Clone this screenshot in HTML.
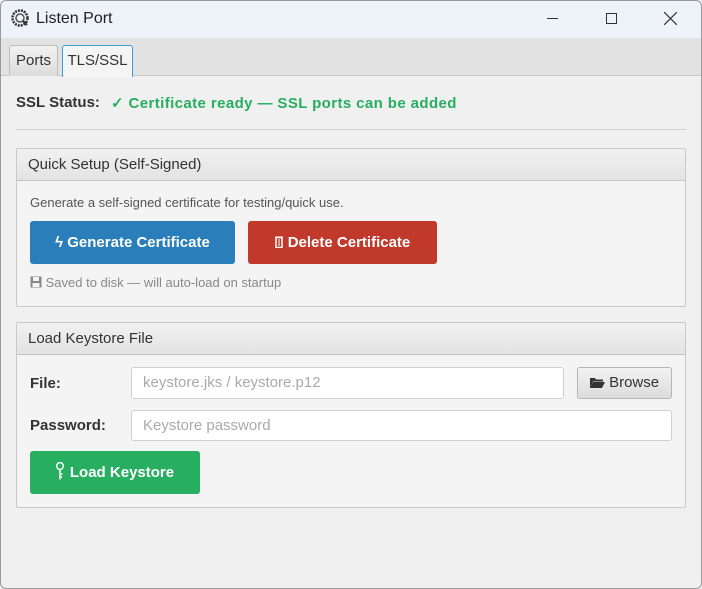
<!DOCTYPE html>
<html><head><style>
*{box-sizing:border-box;margin:0;padding:0}
body{width:702px;height:589px;background:#f0f0f0;font-family:"Liberation Sans",sans-serif;position:relative;overflow:hidden}
.a{position:absolute}
.title{left:0;top:0;width:702px;height:38px;background:#eef3f9}
.tabbar{left:0;top:38px;width:702px;height:38px;background:#e2e2e2;border-bottom:1px solid #c8c8c8}
.tab{top:45px;height:31px;font-size:15px;color:#333;line-height:30px;text-align:center;border:1px solid #bdbdbd;border-bottom:none;border-radius:3px 3px 0 0;background:linear-gradient(#f2f2f2,#dcdcdc)}
.panel{left:16px;width:670px;border:1px solid #c9c9c9;background:#f4f4f4;border-radius:2px}
.ph{height:32px;border-bottom:1px solid #c4c4c4;background:linear-gradient(#f1f1f1,#e3e3e3);font-size:15px;color:#333;line-height:31px;padding-left:11px}
.btn{color:#fff;font-weight:bold;font-size:15px;text-align:center;border-radius:3px}
.inp{background:#fff;border:1px solid #cfcfcf;border-radius:3px;font-size:15px;color:#aaa;padding-left:11px}
.lbl{font-weight:bold;font-size:15px;color:#333}
</style></head><body>
<div class="a title"></div>
<svg class="a" style="left:10px;top:8px" width="20" height="20" viewBox="0 0 20 20"><circle cx="10" cy="10" r="7.5" fill="none" stroke="#333" stroke-width="2.5" stroke-dasharray="2 1"/><circle cx="10" cy="10" r="4" fill="none" stroke="#555" stroke-width="1.5"/><path d="M13 13l4 4" stroke="#333" stroke-width="2"/></svg>
<div class="a" style="left:36px;top:10px;font-size:16px;color:#222">Listen Port</div>
<div class="a" style="left:547px;top:18px;width:11px;height:1px;background:#333"></div>
<div class="a" style="left:606px;top:13px;width:11px;height:11px;border:1px solid #333"></div>
<svg class="a" style="left:664px;top:12px" width="13" height="13"><path d="M0 0L13 13M13 0L0 13" stroke="#333" stroke-width="1.2"/></svg>
<div class="a tabbar"></div>
<div class="a tab" style="left:9px;width:49px">Ports</div>
<div class="a tab" style="left:62px;width:71px;height:32px;background:#f4f4f4;border:1px solid #3aa0d8;border-bottom:none">TLS/SSL</div>
<div class="a" style="left:0;top:77px;width:702px;height:512px;background:#f0f0f0"></div>
<div class="a lbl" style="left:16px;top:94px">SSL Status:</div>
<div class="a" style="left:111px;top:94px;font-weight:bold;font-size:15px;color:#27ae60;letter-spacing:0.4px">✓ Certificate ready — SSL ports can be added</div>
<div class="a" style="left:16px;top:129px;width:670px;height:1px;background:#d0d0d0"></div>
<div class="a panel" style="top:148px;height:159px"><div class="ph">Quick Setup (Self-Signed)</div></div>
<div class="a" style="left:30px;top:195px;font-size:13px;color:#555">Generate a self-signed certificate for testing/quick use.</div>
<div class="a btn" style="left:30px;top:221px;width:205px;height:43px;line-height:43px;background:#2a7fba">ϟ Generate Certificate</div>
<div class="a btn" style="left:248px;top:221px;width:189px;height:43px;line-height:43px;background:#c0392b"><svg width="8" height="12" style="vertical-align:-1px;margin-right:5px"><rect x="1" y="1.5" width="6" height="10" fill="none" stroke="#fff" stroke-width="1.5"/><path d="M0 1h8M4 3v7" stroke="#fff" stroke-width="1"/></svg>Delete Certificate</div>
<div class="a" style="left:30px;top:275px;font-size:13px;color:#888"><svg width="12" height="12" style="vertical-align:-1px"><rect x="0.5" y="0.5" width="11" height="11" fill="#888"/><rect x="3" y="1" width="6" height="4" fill="#f4f4f4"/><rect x="2.5" y="7" width="7" height="4" fill="#f4f4f4"/></svg> Saved to disk — will auto-load on startup</div>
<div class="a panel" style="top:322px;height:186px"><div class="ph">Load Keystore File</div></div>
<div class="a lbl" style="left:30px;top:375px">File:</div>
<div class="a inp" style="left:131px;top:367px;width:433px;height:32px;line-height:30px">keystore.jks / keystore.p12</div>
<div class="a" style="left:577px;top:367px;width:95px;height:32px;border:1px solid #b5b5b5;border-radius:3px;background:linear-gradient(#f2f2f2,#dcdcdc);font-size:15px;color:#333;line-height:30px;text-align:center"><svg width="15" height="11" style="vertical-align:-1px"><path d="M0 1h5l1 1.5h7v2H3L0 11z" fill="#333"/><path d="M3 5h12l-3 6H0z" fill="#333"/></svg> Browse</div>
<div class="a lbl" style="left:30px;top:417px">Password:</div>
<div class="a inp" style="left:131px;top:410px;width:541px;height:31px;line-height:29px">Keystore password</div>
<div class="a btn" style="left:30px;top:451px;width:170px;height:43px;line-height:43px;background:#27ae60"><svg width="8" height="18" style="vertical-align:-3px;margin-right:6px"><ellipse cx="4" cy="4" rx="3.3" ry="3.5" fill="none" stroke="#fff" stroke-width="1.4"/><path d="M4 7.5v10M4 12h2.5M4 15h2" stroke="#fff" stroke-width="1.5"/></svg>Load Keystore</div>
<div class="a" style="left:0;top:0;width:702px;height:589px;border:1px solid #9a9a9a;border-radius:6px;pointer-events:none"></div>
</body></html>
